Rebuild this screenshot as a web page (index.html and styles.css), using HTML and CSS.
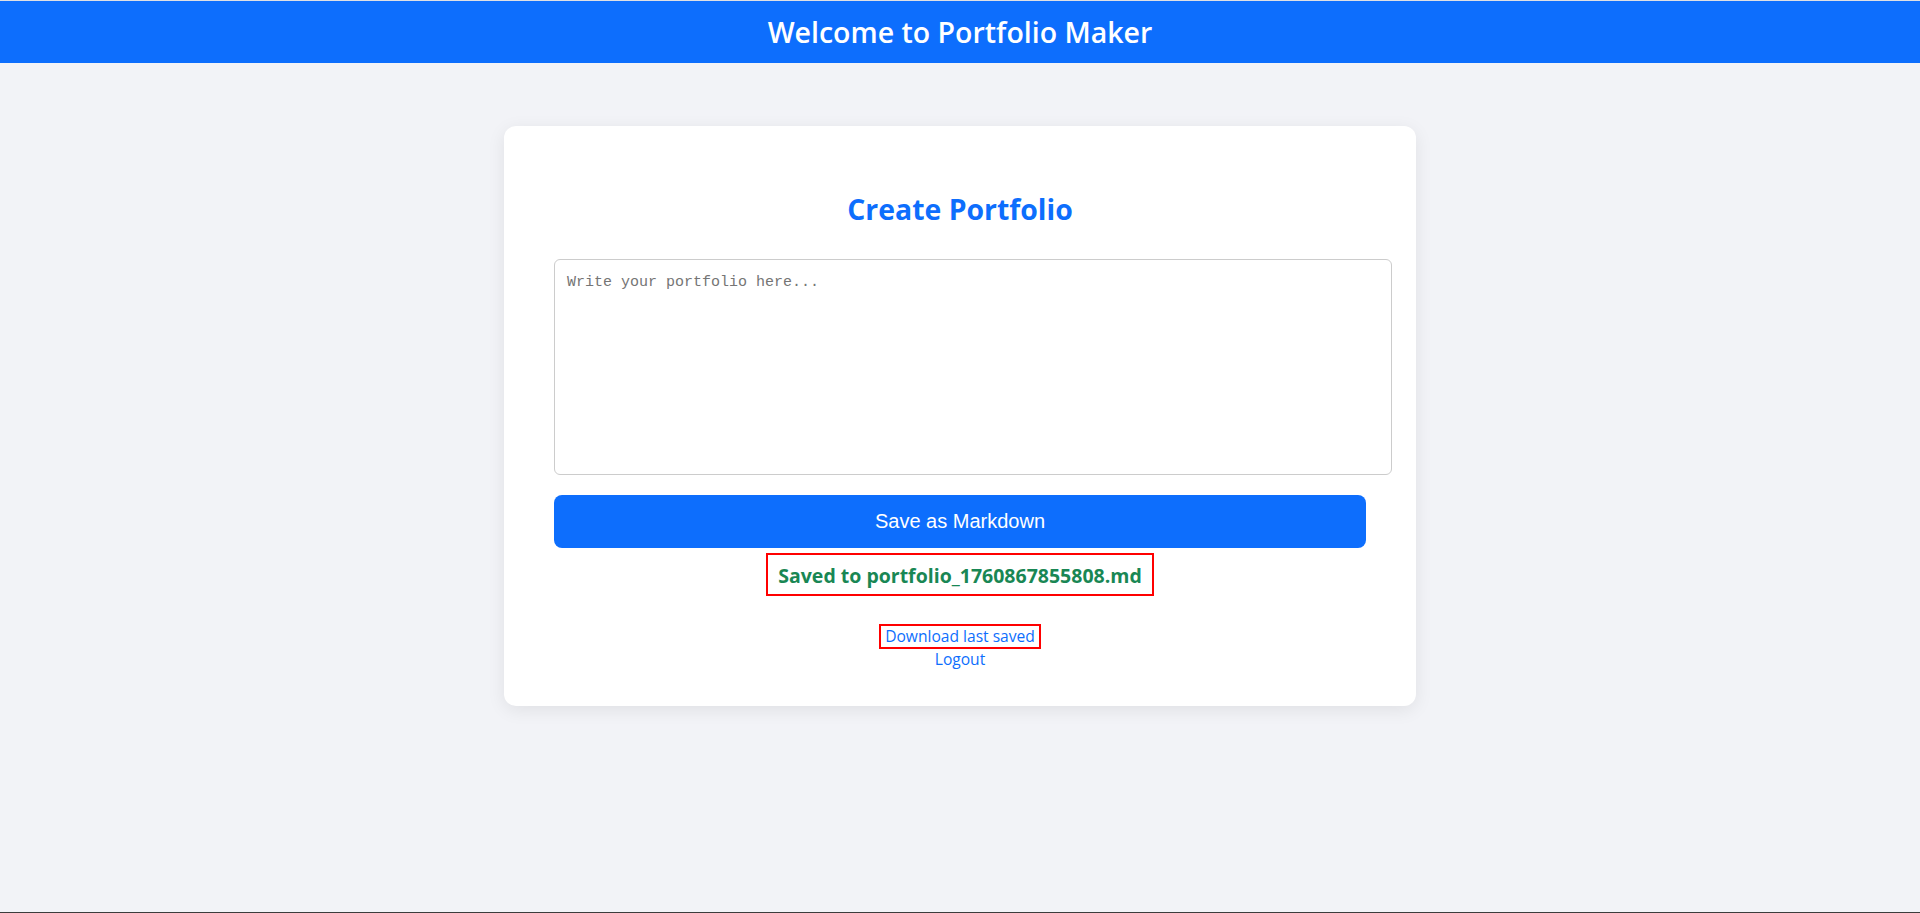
FILE: index.html
```html
<!DOCTYPE html>
<html lang="en">
<head>
    <meta charset="UTF-8">
    <meta name="viewport" content="width=device-width, initial-scale=1.0">
    <title>Portfolio Maker</title>
    <link rel="stylesheet" href="styles.css">
</head>
<body>
    <header class="topbar">
        <h1>Welcome to Portfolio Maker</h1>
    </header>

    <main class="card">
        <h2>Create Portfolio</h2>

        <textarea id="portfolio" placeholder="Write your portfolio here..."></textarea>

        <button class="save-btn">Save as Markdown</button>

        <!-- status after saving -->
        <div class="status">
            <span class="saved">Saved to portfolio_1760867855808.md</span>
        </div>

        <div class="links">
            <a href="#" class="download">Download last saved</a>
            <a href="#" class="logout">Logout</a>
        </div>
    </main>
</body>
</html>
```

FILE: styles.css
```css
body {
    margin: 0;
    min-height: 100vh;
    box-sizing: border-box;
    font-family: "Open Sans", "Noto Sans", sans-serif;
    background-color: #f2f3f7;
    border-top: 1px solid #dfe0e4;
    border-bottom: 1px solid #3c3c3c;
}

.topbar {
    background-color: #0d6efd;
    height: 62px;
    display: flex;
    justify-content: center;
    align-items: center;
}

.topbar h1 {
    margin: 0;
    color: #fff;
    font-size: 28.5px;
    font-weight: 600;
}

.card {
    display: block;
    width: 812px;
    margin: 63px auto 0;
    padding: 49px 50px 36px;
    background: #fff;
    border-radius: 12px;
    box-shadow: 0 4px 18px rgba(0, 0, 0, 0.08);
    text-align: center;
}

.card h2 {
    margin: 15px 0 31px;
    line-height: 38px;
    font-size: 28.4px;
    font-weight: 700;
    color: #0d6efd;
}

textarea {
    display: block;
    width: 100%;
    height: 190px;
    padding: 12px;
    border: 1px solid #ccc;
    border-radius: 6px;
    font-family: "Liberation Mono", monospace;
    font-size: 15px;
    line-height: 1.5;
    resize: none;
}

.save-btn {
    display: block;
    width: 100%;
    margin-top: 20px;
    padding: 15px;
    border: none;
    border-radius: 8px;
    background-color: #0d6efd;
    color: #fff;
    font-family: "Liberation Sans", Arial, sans-serif;
    font-size: 20px;
    line-height: 23px;
    cursor: pointer;
}

.status {
    margin-top: 5px;
}

.saved {
    display: inline-block;
    padding: 9px 10px 7px;
    border: 2px solid red;
    color: #198754;
    font-size: 19.5px;
    font-weight: 700;
    line-height: 23px;
}

.links {
    margin-top: 28px;
    font-size: 15.6px;
    line-height: 21px;
}

.links a {
    color: #0d6efd;
    text-decoration: none;
}

.download {
    display: inline-block;
    padding: 0 4px;
    border: 2px solid red;
}

.logout {
    display: block;
}
```
